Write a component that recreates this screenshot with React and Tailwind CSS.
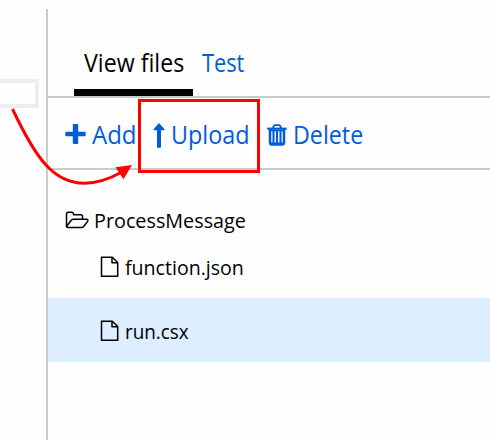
import React from "react";

function PlusIcon() {
  return (
    <svg className="block h-[22px] w-[22px] shrink-0" viewBox="0 0 22 22" fill="#015cda">
      <path d="M8.800 1h3.400q1 0 1 1v6.700h6.500q1 0 1 1v2.600q0 1-1 1h-6.500V20q0 1-1 1H8.800q-1 0-1-1v-6.700H1.300q-1 0-1-1V9.700q0-1 1-1h6.500V2q0-1 1-1z" />
    </svg>
  );
}

function UploadIcon() {
  return (
    <svg className="block h-[25px] w-[12px] shrink-0" viewBox="0 0 12 25" fill="#015cda">
      <path d="M6 0 11.500 6.300Q11.800 7.300 11 7.300H8V24q0 .7-.7.700H4.700Q4 24.700 4 24V7.300H1Q.2 7.300.5 6.300z" />
    </svg>
  );
}

function TrashIcon() {
  return (
    <svg className="block h-[22px] w-[20px] shrink-0" viewBox="0 0 20 22" fill="none" stroke="#015cda">
      <path d="M6 4.500 6.700 2q.3-.9 1.300-.9h4q1 0 1.300.9l.7 2.500" strokeWidth="1.900" />
      <path d="M.3 4.700h19.400" strokeWidth="2.200" />
      <path d="M3 5v13.200q0 2.300 1.700 2.300h10.600q1.700 0 1.700-2.300V5" strokeWidth="2.500" />
      <path d="M3 6.500h14M4 19.300h12" strokeWidth="1.600" />
      <path d="M6.500 7v13M10 7v13M13.500 7v13" strokeWidth="2.100" />
    </svg>
  );
}

function FolderIcon() {
  return (
    <svg className="block h-[18px] w-[24px] shrink-0" viewBox="0 0 24 18" fill="none" stroke="#000" strokeWidth="1.500" strokeLinejoin="round">
      <path d="M1.500 15.500V3q0-1.800 1.800-1.800h3.400q1.800 0 1.800 1.800v.8h7.200q1.800 0 1.800 1.800v2.600" />
      <path d="M1.500 15.500q.3 1 1.700 1h13.500q1.200 0 2-1l3.800-5q1.200-1.900-.8-2.200H8.200q-1.300 0-2.200 1.200z" />
    </svg>
  );
}

function FileIcon() {
  return (
    <svg className="block h-[22px] w-[19px] shrink-0" viewBox="0 0 19 22" fill="none" stroke="#000" strokeWidth="1.500" strokeLinejoin="round">
      <path d="M1.500 1.200h10.800l5.400 5.300v13.800H1.500z" />
      <path d="M12 1.200v5.600h5.700" />
    </svg>
  );
}

function Label({ width, scale, children }) {
  return (
    <span className={`block shrink-0 whitespace-nowrap ${width}`}>
      <span className={`inline-block origin-left ${scale}`}>{children}</span>
    </span>
  );
}

export default function App() {
  return (
    <div className="relative flex h-[440px] w-[490px] overflow-hidden bg-[#fefefe] font-['Open_Sans','Noto_Sans',sans-serif] text-black">
      <aside className="w-[46px] shrink-0 pt-[79px]">
        <div className="h-[29px] w-[39px] border-4 border-l-0 border-[#ededed]" />
      </aside>

      <main className="mt-[9px] min-w-0 flex-1 border-l-2 border-[#cacaca]">
        <nav className="flex h-[89px] border-b-2 border-[#cacaca] pl-[26px] text-[25px] leading-[34px]">
          <div className="h-[87px] w-[119px] border-b-[7px] border-black pl-[10px] pt-[36px]">
            <Label width="w-[102px]" scale="scale-x-[0.927]">View files</Label>
          </div>
          <div className="pl-[9px] pt-[36px] text-[#015cda]">
            <Label width="w-[50px]" scale="scale-x-[0.87]">Test</Label>
          </div>
        </nav>

        <div className="flex h-[72px] items-center border-b-2 border-[#cacaca] pl-[17px] pt-[2px] text-[25px] leading-[34px] text-[#015cda]">
          <PlusIcon />
          <div className="ml-[5px]"><Label width="w-[61px]" scale="scale-x-[0.96]">Add</Label></div>
          <div className="pt-[2px]"><UploadIcon /></div>
          <div className="ml-[6px]"><Label width="w-[96px]" scale="scale-x-[0.935]">Upload</Label></div>
          <div className="pt-[2px]"><TrashIcon /></div>
          <div className="ml-[6px]"><Label width="w-[80px]" scale="scale-x-[0.93]">Delete</Label></div>
        </div>

        <div className="pt-[36px] text-[20.5px] leading-[28px]">
          <div className="flex h-[28px] items-center pl-[17px]">
            <FolderIcon />
            <div className="ml-[5px]"><Label width="w-[160px]" scale="scale-x-[0.965]">ProcessMessage</Label></div>
          </div>
          <div className="mt-[19px] flex h-[28px] items-center pl-[52px]">
            <FileIcon />
            <div className="ml-[6px]"><Label width="w-[130px]" scale="scale-x-[0.955]">function.json</Label></div>
          </div>
          <div className="mt-[17px] flex h-[64px] items-center bg-[#dceeff] pl-[52px] pt-[2px]">
            <FileIcon />
            <div className="ml-[6px]"><Label width="w-[80px]" scale="scale-x-[0.92]">run.csx</Label></div>
          </div>
        </div>
      </main>

      <div className="absolute left-[138px] top-[99px] h-[74px] w-[122px] border-[3px] border-[#fe0000]" />
      <svg className="absolute left-0 top-0 h-[200px] w-[140px]" viewBox="0 0 140 200">
        <path d="M12.500 109C21 127 33 151 46 165C66 187 92 188.500 122 172" fill="none" stroke="#fe0000" strokeWidth="3" />
        <path d="M132 165 115.500 167.300 123.500 179.300z" fill="#fe0000" />
      </svg>
    </div>
  );
}
